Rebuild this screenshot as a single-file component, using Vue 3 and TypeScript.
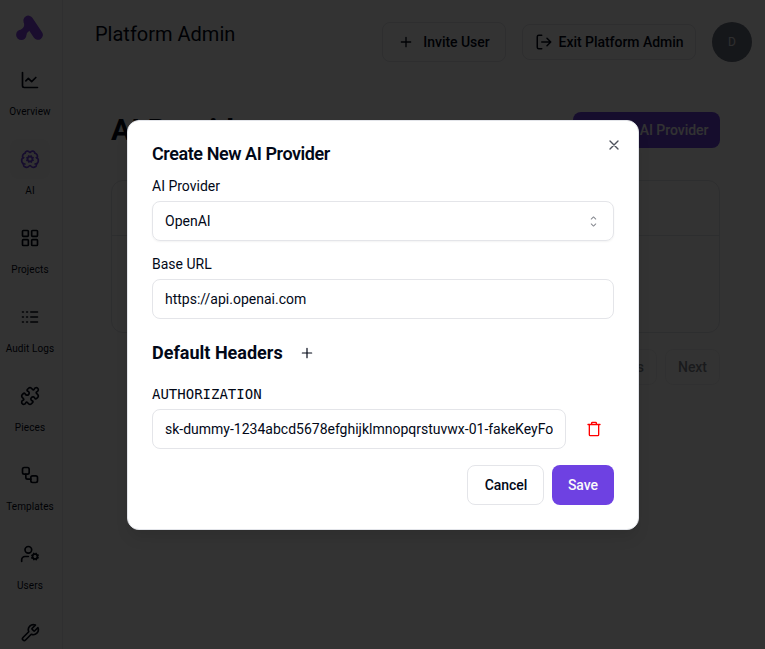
<script setup lang="ts">
interface NavItem {
  label: string
  paths: string[]
  active?: boolean
}

const nav: NavItem[] = [
  { label: 'Overview', paths: ['M3 3v16a2 2 0 0 0 2 2h16', 'm19 9-5 5-4-4-3 3'] },
  {
    label: 'AI',
    active: true,
    paths: [
      'M6.002 5.125a3 3 0 0 1 5.52-1.22c.18.31.78.31.96 0a3 3 0 0 1 5.516 1.22',
      'M17.998 5.125a4 4 0 0 1 2.525 5.771',
      'M19.505 10.294a4 4 0 0 1-1.5 7.706',
      'M4.032 17.483A4 4 0 0 0 11.464 20c.18-.311.892-.311 1.072 0a4 4 0 0 0 7.432-2.516',
      'M4.5 10.291A4 4 0 0 0 6 18',
      'M6.002 5.125a4 4 0 0 0-2.525 5.771',
      'M9 12a3 3 0 1 0 6 0a3 3 0 1 0-6 0',
      'm15.7 13.5-.9-.3', 'm9.2 10.9-.9-.3', 'm10.6 15.7.3-.9', 'm13.1 9.2.3-.9',
      'm13.6 15.7-.4-1', 'm10.8 9.3-.4-1', 'm8.3 13.6 1-.4', 'm14.7 10.8 1-.4',
    ],
  },
  {
    label: 'Projects',
    paths: ['M4 3h5a1 1 0 0 1 1 1v5a1 1 0 0 1-1 1H4a1 1 0 0 1-1-1V4a1 1 0 0 1 1-1Z', 'M15 3h5a1 1 0 0 1 1 1v5a1 1 0 0 1-1 1h-5a1 1 0 0 1-1-1V4a1 1 0 0 1 1-1Z', 'M15 14h5a1 1 0 0 1 1 1v5a1 1 0 0 1-1 1h-5a1 1 0 0 1-1-1v-5a1 1 0 0 1 1-1Z', 'M4 14h5a1 1 0 0 1 1 1v5a1 1 0 0 1-1 1H4a1 1 0 0 1-1-1v-5a1 1 0 0 1 1-1Z'],
  },
  { label: 'Audit Logs', paths: ['M13 12h8', 'M13 18h8', 'M13 6h8', 'M3 12h1', 'M3 18h1', 'M3 6h1', 'M8 12h1', 'M8 18h1', 'M8 6h1'] },
  {
    label: 'Pieces',
    paths: ['M19.439 7.85c-.049.322.059.648.289.878l1.568 1.568c.47.47.706 1.087.706 1.704s-.235 1.233-.706 1.704l-1.611 1.611a.98.98 0 0 1-.837.276c-.47-.07-.802-.48-.968-.925a2.501 2.501 0 1 0-3.214 3.214c.446.166.855.497.925.968a.979.979 0 0 1-.276.837l-1.61 1.61a2.404 2.404 0 0 1-1.705.707 2.402 2.402 0 0 1-1.704-.706l-1.568-1.568a1.026 1.026 0 0 0-.877-.29c-.493.074-.84.504-1.02.968a2.5 2.5 0 1 1-3.237-3.237c.464-.18.894-.527.967-1.02a1.026 1.026 0 0 0-.289-.877l-1.568-1.568A2.402 2.402 0 0 1 1.998 12c0-.617.236-1.234.706-1.704L4.23 8.77c.24-.24.581-.353.917-.303.515.077.877.528 1.073 1.01a2.5 2.5 0 1 0 3.259-3.259c-.482-.196-.933-.558-1.01-1.073-.05-.336.062-.676.303-.917l1.525-1.525A2.402 2.402 0 0 1 12 1.998c.617 0 1.234.236 1.704.706l1.568 1.568c.23.23.556.338.877.29.493-.074.84-.504 1.02-.968a2.5 2.5 0 1 1 3.237 3.237c-.464.18-.894.527-.967 1.02Z'],
  },
  { label: 'Templates', paths: ['M5 3h4a2 2 0 0 1 2 2v4a2 2 0 0 1-2 2H5a2 2 0 0 1-2-2V5a2 2 0 0 1 2-2Z', 'M7 11v4a2 2 0 0 0 2 2h4', 'M15 13h4a2 2 0 0 1 2 2v4a2 2 0 0 1-2 2h-4a2 2 0 0 1-2-2v-4a2 2 0 0 1 2-2Z'] },
  {
    label: 'Users',
    paths: ['M6 7a4 4 0 1 0 8 0a4 4 0 1 0-8 0', 'M10 15H6a4 4 0 0 0-4 4v2', 'M15 15a3 3 0 1 0 6 0a3 3 0 1 0-6 0', 'm21.7 16.4-.9-.3', 'm15.2 13.9-.9-.3', 'm16.6 18.7.3-.9', 'm19.1 12.2.3-.9', 'm19.6 18.7-.4-1', 'm16.8 12.3-.4-1', 'm14.3 16.6 1-.4', 'm20.7 13.8 1-.4'],
  },
  { label: 'Setup', paths: ['M14.7 6.3a1 1 0 0 0 0 1.4l1.6 1.6a1 1 0 0 0 1.4 0l3.77-3.77a6 6 0 0 1-7.94 7.94l-6.91 6.91a2.12 2.12 0 0 1-3-3l6.91-6.91a6 6 0 0 1 7.94-7.94l-3.76 3.76z'] },
]
</script>

<template>
  <div class="screen">
    <div class="page">
      <aside class="sidebar">
        <svg class="logo" viewBox="0 0 28 26" fill="none" stroke="currentColor" stroke-linecap="round">
          <path d="M12.3 5.5 22 19.9" stroke-width="9.8" />
          <circle cx="5.3" cy="19.7" r="5.2" fill="currentColor" stroke="none" />
          <path d="M7.6 7Q9.8 11.8 5 14.6L9 23Q10.8 16.8 13 16.2L15 10Z" fill="currentColor" stroke="none" />
        </svg>
        <nav>
          <div v-for="item in nav" :key="item.label" class="nav-item">
            <span class="nav-icon" :class="{ active: item.active }">
              <svg class="icon s20" viewBox="0 0 24 24"><path v-for="d in item.paths" :key="d" :d="d" /></svg>
            </span>
            <span class="nav-label">{{ item.label }}</span>
          </div>
        </nav>
      </aside>
      <main>
        <header class="topbar">
          <span class="platform">Platform Admin</span>
          <button class="btn outline invite"><svg class="icon s16" viewBox="0 0 24 24"><path d="M5 12h14M12 5v14" /></svg>Invite User</button>
          <button class="btn outline exit"><svg class="icon s18" viewBox="0 0 24 24"><path d="m16 17 5-5-5-5M21 12H9M9 21H5a2 2 0 0 1-2-2V5a2 2 0 0 1 2-2h4" /></svg>Exit Platform Admin</button>
          <span class="avatar">D</span>
        </header>
        <section class="content">
          <div class="heading">
            <h1>AI Providers</h1>
            <button class="btn primary new"><svg class="icon s16" viewBox="0 0 24 24"><path d="M5 12h14M12 5v14" /></svg>New AI Provider</button>
          </div>
          <div class="table"><div class="table-head"></div></div>
          <div class="pager">
            <button class="btn outline">Previous</button>
            <button class="btn outline">Next</button>
          </div>
        </section>
      </main>
    </div>

    <div class="overlay">
      <div class="dialog" role="dialog">
        <button class="close"><svg class="icon s16" viewBox="0 0 24 24"><path d="M18 6 6 18M6 6l12 12" /></svg></button>
        <h2 class="title">Create New AI Provider</h2>
        <label class="label">AI Provider</label>
        <div class="field select">
          <span>OpenAI</span>
          <svg class="caret" viewBox="0 0 15 15"><path fill="currentColor" fill-rule="evenodd" d="M4.93 5.43a.45.45 0 0 0 .64 0L7.5 3.5l1.93 1.93a.45.45 0 0 0 .64-.64L7.82 2.54a.45.45 0 0 0-.64 0L4.93 4.79a.45.45 0 0 0 0 .64ZM10.07 9.57a.45.45 0 0 0-.64 0L7.5 11.5 5.57 9.57a.45.45 0 0 0-.64.64l2.25 2.25a.45.45 0 0 0 .64 0l2.25-2.25a.45.45 0 0 0 0-.64Z" /></svg>
        </div>
        <label class="label">Base URL</label>
        <div class="field"><span>https://api.openai.com</span></div>
        <div class="headers-row">
          <h3>Default Headers</h3>
          <svg class="icon s16 thin" viewBox="0 0 24 24"><path d="M5 12h14M12 5v14" /></svg>
        </div>
        <label class="label mono">AUTHORIZATION</label>
        <div class="header-value">
          <div class="field"><span>sk-dummy-1234abcd5678efghijklmnopqrstuvwx-01-fakeKeyForDemo</span></div>
          <button class="trash"><svg class="icon s16" viewBox="0 0 24 24"><path d="M3 5.3h18M19 5.3v15.4a1.3 1.3 0 0 1-1.3 1.3H6.3A1.3 1.3 0 0 1 5 20.7V5.3M8.5 5.3V3a1 1 0 0 1 1-1h5a1 1 0 0 1 1 1v2.3" /></svg></button>
        </div>
        <footer class="actions">
          <button class="btn outline cancel">Cancel</button>
          <button class="btn primary save">Save</button>
        </footer>
      </div>
    </div>
  </div>
</template>

<style>
body { margin: 0; overflow: hidden; }
</style>

<style scoped>
* { box-sizing: border-box; }
.screen { position: relative; width: 765px; height: 649px; overflow: hidden; background: #fff; color: #020817; font-family: Roboto, sans-serif; font-size: 14px; line-height: 20px; }
h1, h2, h3 { margin: 0; }
button { font: inherit; color: inherit; border: 0; background: none; padding: 0; }
.icon { display: block; flex: none; fill: none; stroke: currentColor; stroke-width: 2; stroke-linecap: round; stroke-linejoin: round; }
.s16 { width: 16px; height: 16px; }
.s18 { width: 18px; height: 18px; }
.s20 { width: 20px; height: 20px; }
.thin { stroke-width: 1.8; }
.page { display: flex; height: 100%; }
.sidebar { flex: none; width: 63px; border-right: 1px solid #e9ebef; padding-top: 15px; padding-right: 2px; display: flex; flex-direction: column; align-items: center; }
.logo { width: 28px; height: 26px; flex: none; color: #8142e3; }
nav { padding-top: 19px; }
.nav-item { height: 79px; display: flex; flex-direction: column; align-items: center; }
.nav-icon { width: 40px; height: 40px; border-radius: 8px; display: flex; align-items: center; justify-content: center; }
.nav-icon.active { color: #6e41e2; background: #fafafa; }
.nav-label { font-size: 10px; line-height: 16px; margin-top: 4px; white-space: nowrap; letter-spacing: .1px; }
main { flex: 1; display: flex; flex-direction: column; padding-right: 13px; }
.topbar { display: flex; align-items: center; padding: 22px 0 0 32px; }
.platform { flex: 1; font-size: 20px; line-height: 28px; margin-top: -16px; }
.btn { display: inline-flex; align-items: center; justify-content: center; height: 36px; border-radius: 8px; font-weight: 500; letter-spacing: -.04px; white-space: nowrap; }
.outline { border: 1px solid #e4e5e9; background: #fff; }
.primary { background: #6e41e2; color: #fafafa; }
.invite { width: 124px; height: 40px; gap: 9px; margin-right: 16px; }
.exit { width: 174px; gap: 6px; margin-right: 16px; }
.avatar { width: 40px; height: 40px; border-radius: 50%; background: #6b7280; color: #e5e7eb; font-size: 12px; display: flex; align-items: center; justify-content: center; }
.content { padding: 50px 32px 0 48px; }
.heading { display: flex; justify-content: space-between; height: 36px; align-items: center; }
h1 { font-size: 30px; line-height: 36px; font-weight: 700; }
.new { width: 147px; gap: 8px; }
.table { margin-top: 32px; height: 153px; border: 1px solid #e2e4e9; border-radius: 12px; }
.table-head { height: 55px; border-bottom: 1px solid #e2e4e9; }
.pager { display: flex; justify-content: flex-end; gap: 8px; margin-top: 16px; }
.pager .btn { padding: 0 12px; opacity: .5; }
.overlay { position: absolute; inset: 0; background: rgba(0, 0, 0, .8); display: flex; justify-content: center; align-items: flex-start; padding: 120px 0 0 1px; }
.dialog { position: relative; width: 512px; height: 410px; background: #fff; border: 1px solid #e2e4e9; border-radius: 12px; padding: 24px; display: flex; flex-direction: column; box-shadow: 0 10px 15px -3px rgba(0, 0, 0, .1); }
.close { position: absolute; top: 16px; right: 16px; opacity: .7; }
.title { font-size: 18px; line-height: 18px; font-weight: 600; letter-spacing: -.43px; margin-bottom: 13px; }
.label { height: 20px; margin-bottom: 5px; }
.field { height: 40px; flex: none; border: 1px solid #e4e5e9; border-radius: 8px; padding: 0 12px; display: flex; align-items: center; margin-bottom: 13px; }
.field span { flex: 1; overflow: hidden; white-space: nowrap; }
.select { box-shadow: 0 1px 2px rgba(0, 0, 0, .05); }
.caret { width: 15px; height: 15px; opacity: .5; }
.headers-row { display: flex; align-items: center; gap: 16px; height: 40px; margin: 1px 0 11px; }
h3 { font-size: 18px; font-weight: 700; line-height: 28px; }
.mono { font-family: "DejaVu Sans Mono", monospace; }
.header-value { display: flex; height: 40px; gap: 8px; }
.header-value .field { flex: 1; min-width: 0; margin: 0; }
.trash { width: 40px; display: flex; align-items: center; justify-content: center; color: #f00; }
.actions { display: flex; justify-content: flex-end; gap: 8px; margin-top: 16px; }
.actions .btn { height: 40px; }
.cancel { width: 77px; padding-left: 1px; }
.save { width: 62px; }
</style>
